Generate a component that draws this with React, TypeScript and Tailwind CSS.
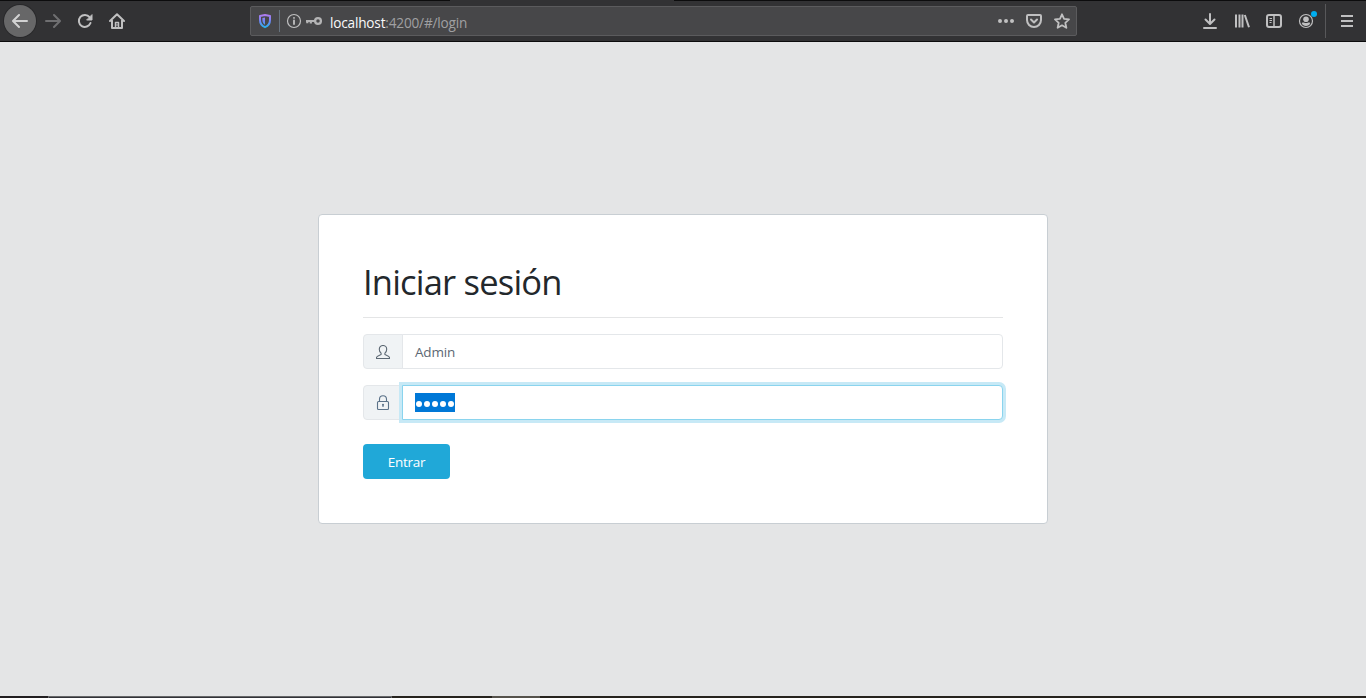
import type { ReactNode } from 'react';

const LIGHT = '#c0c0c1';

function Icon({ children, color = LIGHT, size = 16, className = '' }: { children: ReactNode; color?: string; size?: number; className?: string }) {
  return (
    <svg width={size} height={size} viewBox="0 0 16 16" fill="none" stroke={color} strokeWidth="2" strokeLinecap="round" strokeLinejoin="round" className={`shrink-0 ${className}`}>
      {children}
    </svg>
  );
}

function Navigation() {
  return (
    <nav className="flex w-[250px] shrink-0 items-center pl-1">
      <button aria-label="Back" className="flex size-8 items-center justify-center rounded-full bg-[#676768] shadow-[0_0_0_1px_#29292b]">
        <Icon color="#d2d2d2"><path d="M15 8H1.5M7 2 1 8l6 6" /></Icon>
      </button>
      <Icon color="#6f6f71" className="ml-[9px]"><path d="M1 8h13.5M9 2l6 6-6 6" /></Icon>
      <Icon className="ml-4">
        <path d="M13.5 10A6 6 0 1 1 12.6 4.2" />
        <path d="M15 2v5h-5z" fill={LIGHT} stroke={LIGHT} strokeWidth="1" />
      </Icon>
      <Icon className="ml-4">
        <path d="M1 8 8 1.3 15 8M3 7.5V15h10V7.5" />
        <path d="M6.5 14.5v-5h3v5" strokeWidth="1.5" />
        <path d="M8 11.5v1" strokeWidth="1" />
      </Icon>
    </nav>
  );
}

function AddressBar() {
  return (
    <div className="flex h-[30px] w-[827px] shrink-0 items-center rounded-[2px] border border-[#5b5b5d] bg-[#474749] pl-[6px] pr-[6px]">
      <svg width="16" height="16" viewBox="0 0 16 16" fill="none" className="shrink-0">
        <defs>
          <linearGradient id="shield" gradientUnits="userSpaceOnUse" x1="0" y1="1" x2="0" y2="15">
            <stop offset="0" stopColor="#b77bef" />
            <stop offset="0.5" stopColor="#7184f4" />
            <stop offset="1" stopColor="#21b5ed" />
          </linearGradient>
        </defs>
        <path d="M8 2 13 3V7c0 3.500-1.700 5.800-5 7.200C4.700 12.800 3 10.500 3 7V3z" stroke="url(#shield)" strokeWidth="2" strokeLinejoin="round" />
        <path d="M8 4.500v7.300C6.300 10.700 5.400 9.200 5.400 7V5z" fill="url(#shield)" />
      </svg>
      <span className="ml-[6px] h-[22px] w-px bg-[#66727d]" />
      <Icon className="ml-[6px]">
        <circle cx="8" cy="8" r="6.500" strokeWidth="1.200" />
        <path d="M8 7.500V11" strokeWidth="1.800" />
        <path d="M8 4.800v.1" strokeWidth="1.800" />
      </Icon>
      <Icon className="ml-1" color="#b4b4b5">
        <circle cx="12" cy="8" r="2.900" strokeWidth="2.300" />
        <path d="M9 8H0M1.300 8v2.200M4.800 8v2.500" strokeWidth="2.200" strokeLinecap="butt" />
      </Icon>
      <span className="ml-2 mt-[3px] whitespace-nowrap font-['Open_Sans','Noto_Sans',sans-serif] text-[13.600px] leading-5 tracking-[-0.180px] text-[#a0a0a2]">
        <span className="text-[#f9f9fa]">localhost</span>:4200/#/login
      </span>
      <div className="ml-auto flex items-center gap-3">
        <Icon><path d="M2 8h.01M8 8h.01M14 8h.01" strokeWidth="4" /></Icon>
        <Icon>
          <path d="M2 2h12a1 1 0 0 1 1 1v4a7 7 0 0 1-14 0V3a1 1 0 0 1 1-1z" />
          <path d="m5 6.500 3 3 3-3" />
        </Icon>
        <Icon><path d="m8 1.300 2.050 4.600 4.950.5-3.700 3.400 1.050 5L8 12.300l-4.350 2.500 1.050-5L1 6.400l4.950-.5z" strokeWidth="1.800" /></Icon>
      </div>
    </div>
  );
}

function ToolbarActions() {
  return (
    <div className="ml-auto flex h-full items-center">
      <Icon><path d="M8 1v9M3.500 6.500 8 11l4.500-4.500M2 15h12" /></Icon>
      <Icon className="ml-4"><path d="M2 1.500v13M5.500 1.500v13M8.500 1.500v13M10.800 2 15 14.300" strokeLinecap="butt" /></Icon>
      <Icon className="ml-4">
        <rect x="1" y="2" width="14" height="12" rx="2" />
        <path d="M8 2v12" strokeWidth="1.500" />
        <path d="M3.500 5.500h2.500M3.500 7.500h2.500M3.500 9.500h2" strokeWidth="1" strokeLinecap="butt" />
      </Icon>
      <div className="relative ml-4 flex">
        <Icon>
          <circle cx="8" cy="8" r="6.500" strokeWidth="1.200" />
          <circle cx="8" cy="6.200" r="2.800" fill={LIGHT} stroke="none" />
          <path d="M3.700 10C5.500 9 6 10 8 10s2.500-1 4.300 0C11.500 12.300 10 13 8 13s-3.500-.7-4.300-3z" fill={LIGHT} stroke="none" />
        </Icon>
        <span className="absolute -right-[3px] -top-[2px] size-[6px] rounded-full bg-[#00aeef]" />
      </div>
      <span className="ml-[11px] h-[34px] w-px bg-[#58585a]" />
      <Icon className="ml-[13px] mr-[11px]"><path d="M2 3h12M2 8h12M2 13h12" strokeLinecap="butt" /></Icon>
    </div>
  );
}

function BrowserToolbar() {
  return (
    <header className="flex h-[42px] shrink-0 flex-col bg-[#323234]">
      <div className="flex h-px shrink-0 justify-between">
        <span className="w-[450px] bg-[#0c0c0d]" />
        <span className="w-[692px] bg-[#0c0c0d]" />
      </div>
      <div className="flex h-10 shrink-0 items-center">
        <Navigation />
        <AddressBar />
        <ToolbarActions />
      </div>
      <div className="h-px bg-[#0c0c0d]" />
    </header>
  );
}

function UserIcon() {
  return (
    <svg width="14" height="14" viewBox="0 0 14 14" fill="none" stroke="#5c6873" strokeWidth="1.100" strokeLinejoin="round">
      <path d="M7 .5c-2.400 0-3.700 1.500-3.700 3.700 0 1.700.7 3.100 1.800 3.900v1.500C3.500 10.400.5 10.900.5 12.500v1h13v-1c0-1.600-3-2.100-4.600-2.900V8.100c1.100-.8 1.800-2.200 1.800-3.900C10.700 2 9.400.5 7 .5z" />
    </svg>
  );
}

function LockIcon() {
  return (
    <svg width="14" height="16" viewBox="0 0 14 16" fill="none" stroke="#5b7289" strokeWidth="1.100">
      <rect x="1.500" y="6.500" width="11" height="8" rx="1" />
      <path d="M3.500 6.500V4.300C3.500 2.100 4.900.8 7 .8s3.500 1.300 3.500 3.500v2.200" />
      <circle cx="7" cy="9.700" r="1" fill="#5b7289" stroke="none" />
      <path d="M7 9.500v2.500" />
    </svg>
  );
}

function LoginCard() {
  return (
    <main className="h-[310px] w-[730px] rounded border border-[#c8ced3] bg-white px-11 pt-[44px] font-['Open_Sans','Noto_Sans',sans-serif] text-sm text-[#5c6873]">
      <h1 className="h-[59px] whitespace-nowrap border-b border-[#e4e5e6] pt-px text-[34.500px] leading-[44px] tracking-[-0.800px] text-[#23282c]">Iniciar sesión</h1>
      <form className="mt-4" onSubmit={(event) => event.preventDefault()}>
        <div className="flex h-[35px]">
          <span className="flex w-10 items-center justify-center rounded-l border border-[#e4e7ea] bg-[#f0f3f5]"><UserIcon /></span>
          <div className="-ml-px flex flex-1 items-center rounded-r border border-[#e4e7ea] px-3 pt-[2px] text-[13.500px] tracking-[-0.200px]">Admin</div>
        </div>
        <div className="mt-4 flex h-[35px]">
          <span className="flex w-10 items-center justify-center rounded-l border border-[#e4e7ea] bg-[#f0f3f5]"><LockIcon /></span>
          <div className="z-10 -ml-px flex flex-1 items-center rounded-r border border-[#8ad4ee] bg-white px-3 shadow-[0_0_0_3px_#c7e9f6]">
            <span className="flex h-[19px] w-10 items-center justify-around bg-[#0078d7] pt-[3px]">
              {[0, 1, 2, 3, 4].map((dot) => <span key={dot} className="size-[6.500px] rounded-full bg-white" />)}
            </span>
          </div>
        </div>
        <button className="mt-6 block h-[35px] w-[87px] rounded bg-[#20a8d8] pt-[2px] text-[13.500px] tracking-[-0.250px] text-white">Entrar</button>
      </form>
    </main>
  );
}

export default function App() {
  return (
    <div className="flex h-[698px] w-[1366px] flex-col overflow-hidden bg-[#e4e5e6]">
      <BrowserToolbar />
      <div className="flex min-h-0 flex-1 justify-center pt-[172px]"><LoginCard /></div>
      <footer className="flex h-[2px] shrink-0 bg-[#26231e]">
        <span className="w-12 bg-[#211e20]" />
        <span className="w-[344px] border-x border-t border-[#666769] bg-[#323338]" />
        <span className="w-[100px]" />
        <span className="w-12 bg-[#56534c]" />
      </footer>
    </div>
  );
}
